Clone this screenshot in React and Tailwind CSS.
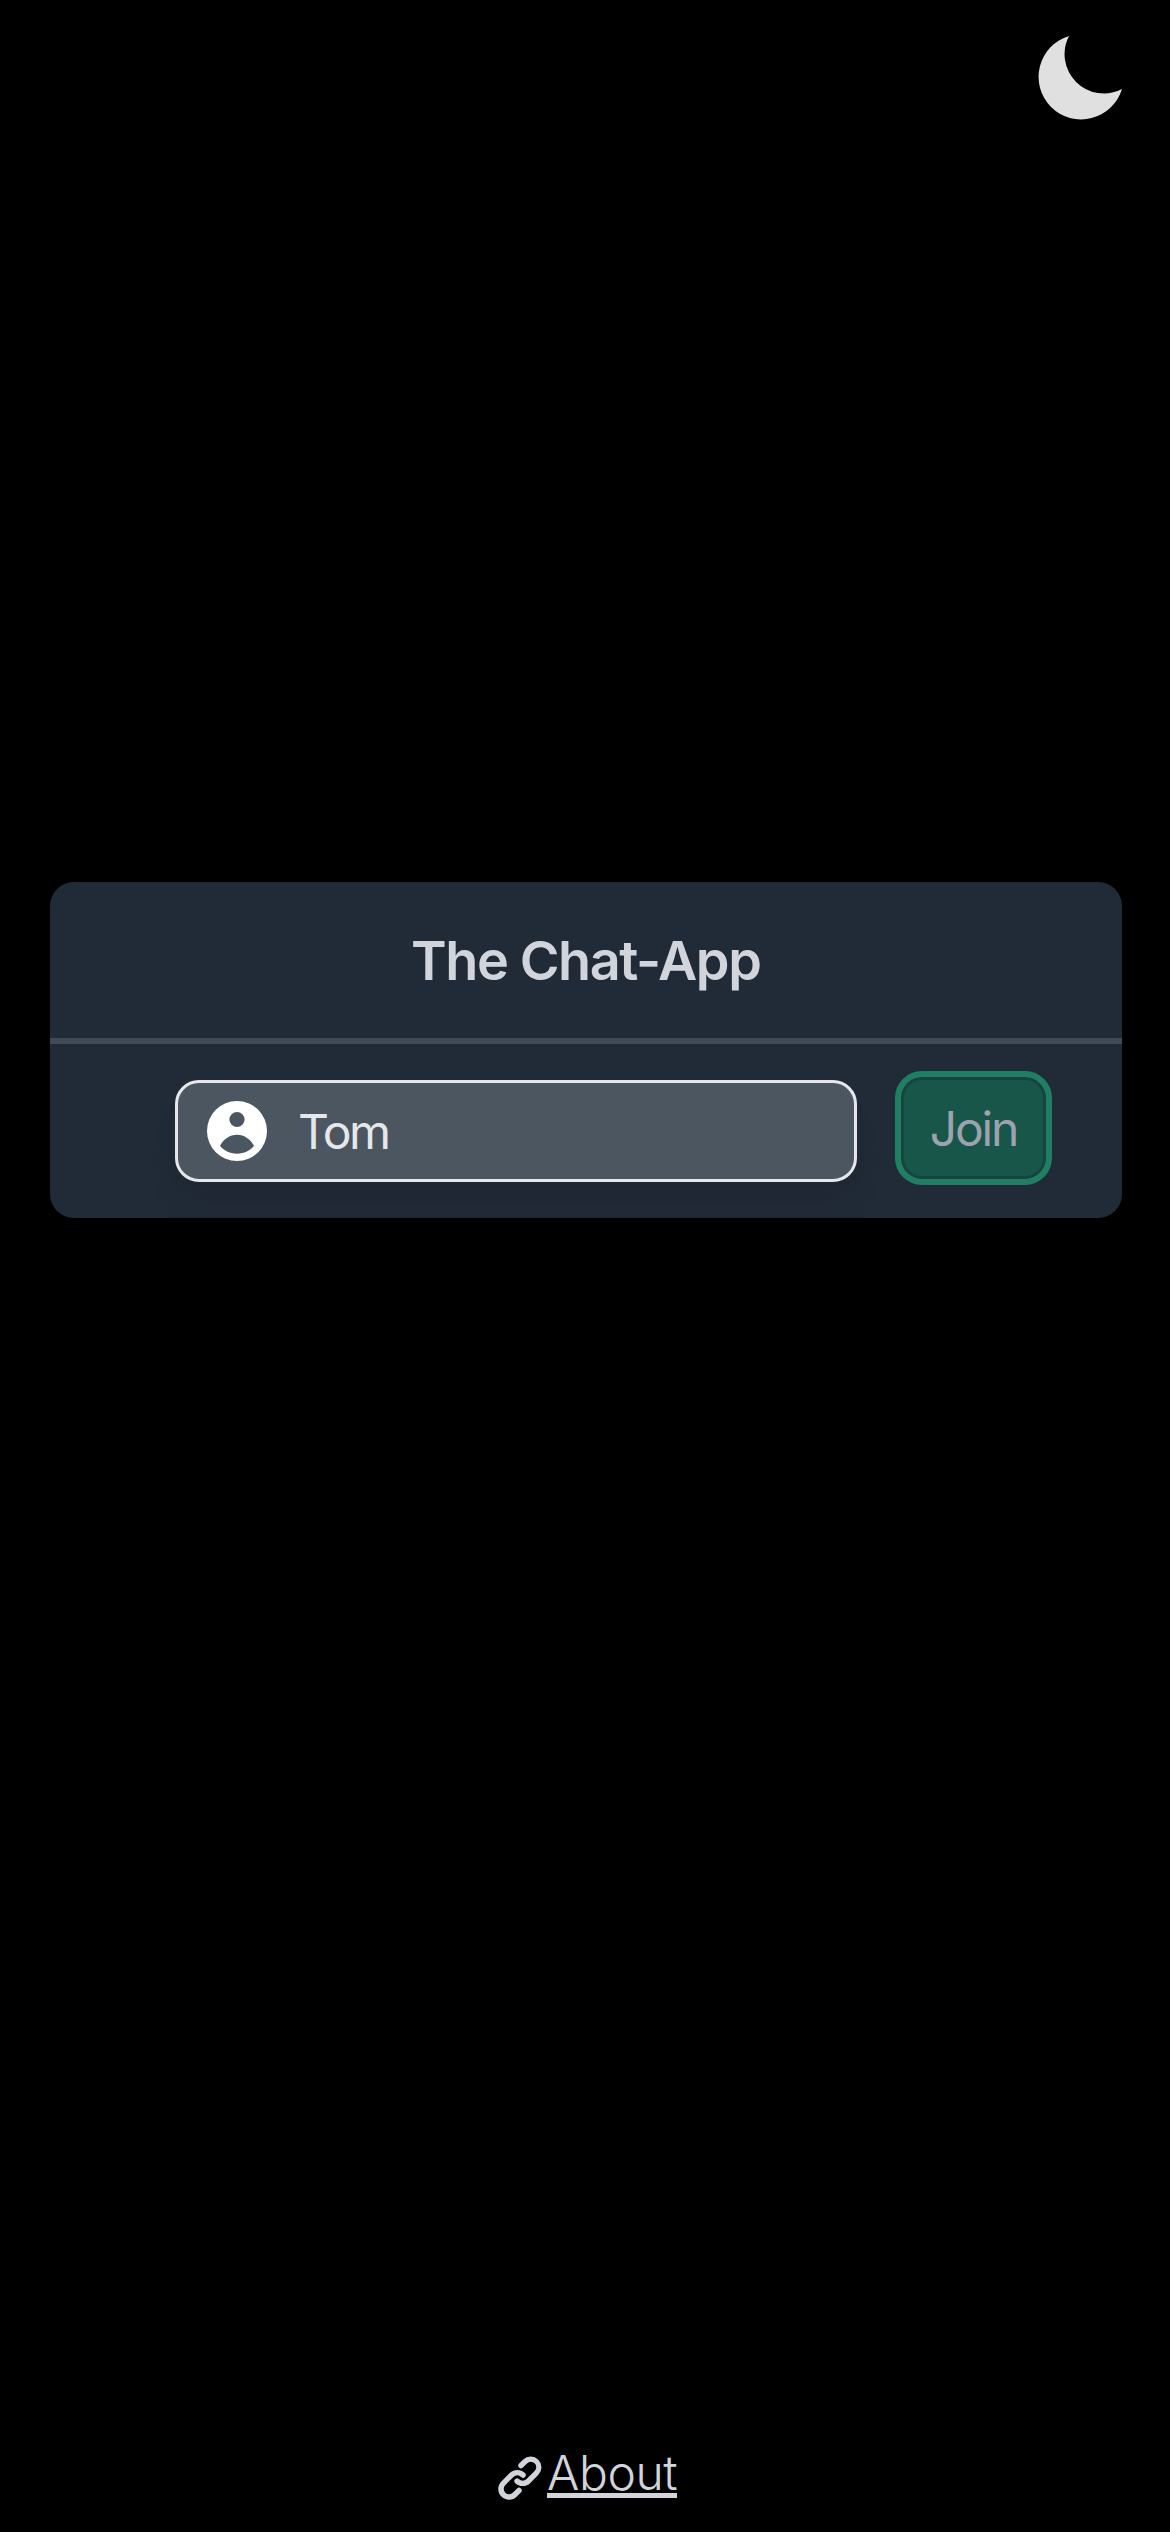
function Moon() {
  return (
    <svg className="h-[84px] w-[84px]" viewBox="1038 36 84 84" fill="#e0e0e0" aria-label="Dark mode">
      <path d="M1069 36A42.6 42.6 0 1 0 1122 89A39.3 39.3 0 0 1 1069 36Z" />
    </svg>
  );
}

function Account() {
  return (
    <svg className="h-[60px] w-[60px] shrink-0" viewBox="0 0 60 60" fill="white" fillRule="evenodd">
      <path d="M30 0a30 30 0 1 1 0 60a30 30 0 0 1 0-60ZM30 10.900a7.600 7.600 0 1 0 0 15.200a7.600 7.600 0 0 0 0-15.200ZM13 44.800C16.500 49.500 23 52.700 30 52.700S43.500 49.500 47 44.800C43.500 38.500 37.500 33.800 30 33.800S16.500 38.500 13 44.800Z" />
    </svg>
  );
}

function Link() {
  return (
    <svg className="mt-[5px] h-[54px] w-[54px]" viewBox="0 0 20 20" fill="currentColor">
      <path
        fillRule="evenodd"
        clipRule="evenodd"
        d="M12.586 4.586a2 2 0 112.828 2.828l-3 3a2 2 0 01-2.828 0 1 1 0 00-1.414 1.414 4 4 0 005.656 0l3-3a4 4 0 00-5.656-5.656l-1.500 1.500a1 1 0 101.414 1.414l1.500-1.500zm-5 5a2 2 0 012.828 0 1 1 0 101.414-1.414 4 4 0 00-5.656 0l-3 3a4 4 0 105.656 5.656l1.500-1.500a1 1 0 10-1.414-1.414l-1.500 1.500a2 2 0 11-2.828-2.828l3-3z"
      />
    </svg>
  );
}

export default function App() {
  return (
    <div className="flex h-[2532px] w-[1170px] flex-col bg-black font-['Inter',sans-serif] text-[#d1d5db]">
      <header className="flex h-[882px] shrink-0 items-start justify-end pt-9 pr-12">
        <Moon />
      </header>

      <main className="mr-12 ml-[49.5px] h-[336px] shrink-0 overflow-hidden rounded-[24px] bg-[#212a37]">
        <h1 className="flex h-[162px] items-center justify-center border-b-[6px] border-[#414856] pt-px text-[54px] leading-[72px] font-semibold tracking-[-1.4px]">
          The Chat-App
        </h1>
        <form className="flex items-start pt-[27px] pl-[125.500px]">
          <label className="mt-[9px] flex h-[102px] w-[682px] items-center rounded-[24px] border-[3px] border-[#e5e7eb] bg-[#4b5661] pl-[29px] text-[48px] text-[#e5e7eb] shadow-[0_30px_45px_-9px_rgba(0,0,0,0.06),0_12px_18px_-6px_rgba(0,0,0,0.06)]">
            <Account />
            <span className="ml-[31px] pt-[2px] tracking-[-2.500px]">Tom</span>
          </label>
          <button
            type="button"
            className="ml-[38px] h-[114px] w-[157px] rounded-[27px] border-[6px] border-[#207f62] bg-[#19564a] pt-[2px] text-[48px] leading-[72px] tracking-[-2.200px] text-[#9ca3af] shadow-[inset_0_0_0_3px_#17443e]"
          >
            Join
          </button>
        </form>
      </main>

      <footer className="mt-auto flex h-[86px] items-start pl-[493px]">
        <Link />
        <a className="h-[52px] border-b-[5px] border-[#d1d5db] text-[48px] leading-[53px] font-light tracking-[-0.4px]">About</a>
      </footer>
    </div>
  );
}
